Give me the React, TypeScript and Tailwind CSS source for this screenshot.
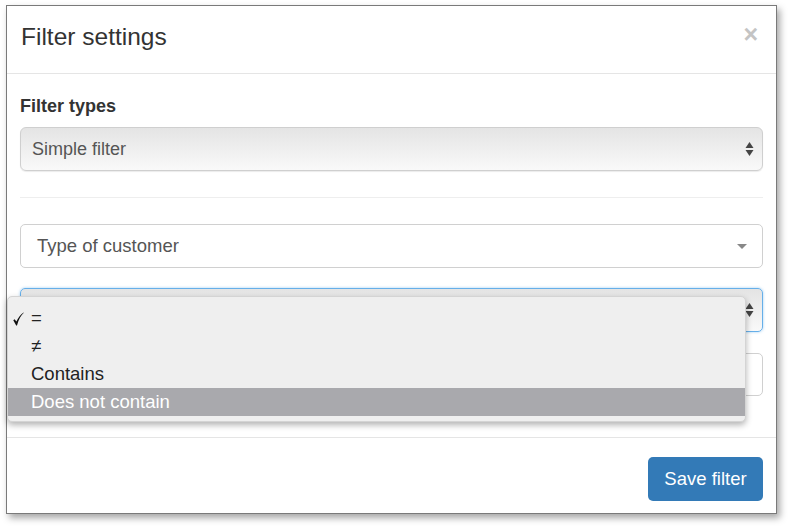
import React from "react";

function UpDown({ className = "" }: { className?: string }) {
  return (
    <svg width="9" height="16" viewBox="0 0 9 16" className={className}>
      <path d="M4.5 1 L8.5 7 L0.5 7 Z" fill="#444" />
      <path d="M4.5 15 L8.5 9 L0.5 9 Z" fill="#444" />
    </svg>
  );
}

export default function App() {
  return (
    <div
      className="w-[790px] h-[526px] bg-white pl-[6px] pt-[5px]"
      style={{ fontFamily: '"Liberation Sans", Arial, sans-serif' }}
    >
      <div className="relative w-[771px] h-[509px] border border-[#7a7a7a] bg-white shadow-[3px_4px_7px_rgba(0,0,0,0.35)] flex flex-col">
        {/* Header */}
        <div className="h-[68px] border-b border-[#e5e5e5] flex items-center justify-between pl-[14px] pr-[18px]">
          <h1 className="text-[24.5px] text-[#333] leading-none pb-[4px]">Filter settings</h1>
          <span className="text-[25px] text-[#c4c4c4] font-bold leading-none mb-[11px]">×</span>
        </div>

        {/* Body */}
        <div className="flex-1 px-[13px] pt-[22px]">
          <div className="text-[18px] font-bold text-[#333] leading-[21px] mb-[10px]">Filter types</div>
          <div className="h-[44px] rounded-[6px] border border-[#cfcfcf] bg-gradient-to-b from-[#e4e4e4] to-[#f9f9f9] shadow-[0_1px_1px_rgba(0,0,0,0.08)] flex items-center justify-between pl-[11px] pr-[8px]">
            <span className="text-[18px] text-[#555]">Simple filter</span>
            <UpDown />
          </div>
          <div className="h-px bg-[#eeeeee] mt-[26px] mb-[26px]" />
          <div className="h-[44px] rounded-[5px] border border-[#d0d0d0] bg-white flex items-center justify-between pl-[16px] pr-[15px]">
            <span className="text-[18.5px] text-[#555]">Type of customer</span>
            <svg width="10" height="5" viewBox="0 0 10 5">
              <path d="M0 0 L10 0 L5 5 Z" fill="#888" />
            </svg>
          </div>
          <div className="mt-[20px] h-[44px] rounded-[5px] border border-[#66afe9] shadow-[0_0_3px_rgba(102,175,233,0.6)] bg-gradient-to-b from-[#e4e4e4] to-[#f9f9f9] flex items-center justify-end pr-[8px]">
            <UpDown />
          </div>
          <div className="mt-[21px] h-[43px] rounded-[5px] border border-[#d0d0d0] bg-white" />
        </div>

        {/* Footer */}
        <div className="h-[76px] border-t border-[#e5e5e5] flex justify-end items-start pt-[19px] pr-[13px]">
          <button className="h-[44px] w-[115px] rounded-[5px] bg-[#337ab7] text-white text-[18.5px]">Save filter</button>
        </div>

        {/* Dropdown menu overlay */}
        <div className="absolute left-0 top-[290px] w-[739px] h-[126px] rounded-[5px] bg-[#efefef] border border-[#d4d4d4] shadow-[0_3px_6px_rgba(0,0,0,0.3)] pt-[7px] text-[18.5px] text-[#222]">
          <div className="relative h-[28px] flex items-center pl-[23px]">
            <svg
              className="absolute left-[5px] top-[8px]"
              width="11"
              height="14"
              viewBox="0 0 11 14"
            >
              <path
                d="M0.3 8.2 L1.6 7.2 L3.4 9.6 C5 6 7.4 2.6 10.6 0.4 L10.8 0.8 C8 3.4 5.6 7.6 4 13.4 L3.2 13.4 Z"
                fill="#111"
              />
            </svg>
            =
          </div>
          <div className="h-[28px] flex items-center pl-[23px]">≠</div>
          <div className="h-[28px] flex items-center pl-[23px]">Contains</div>
          <div className="h-[28px] flex items-center pl-[23px] bg-[#a9a9ad] text-white">Does not contain</div>
        </div>
      </div>
    </div>
  );
}
